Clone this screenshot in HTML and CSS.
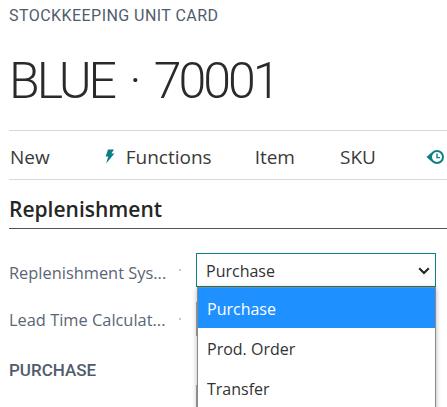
FILE: index.html
```html
<!DOCTYPE html>
<html lang="en">
<head>
<meta charset="utf-8">
<title>Stockkeeping Unit Card</title>
<link rel="stylesheet" href="styles.css">
</head>
<body>
<div class="page">
  <div class="caption">STOCKKEEPING UNIT CARD</div>
  <h1 class="title">BLUE · 70001</h1>
  <nav class="actions">
    <span class="action action-new">New</span>
    <span class="action action-functions">
      <svg class="icon-bolt" width="11" height="15" viewBox="0 0 11 15"><path d="M4 0.5H10L7.4 4.6H10.4L2.2 14.5L4.2 7.6H1.6Z" fill="#0b7f86"/></svg>
      Functions
    </span>
    <span class="action action-item">Item</span>
    <span class="action action-sku">SKU</span>
    <svg class="icon-history" width="20" height="16" viewBox="0 0 20 16"><circle cx="11" cy="8" r="6" fill="none" stroke="#0b7f86" stroke-width="2"/><path d="M0.5 8L5.5 3.5V12.5Z" fill="#0b7f86"/><path d="M11 4.5V8.6H14" fill="none" stroke="#0b7f86" stroke-width="1.4"/></svg>
  </nav>
  <h2 class="section">Replenishment</h2>
  <div class="fields">
    <div class="field">
      <span class="label label-first">Replenishment Sys...</span><span class="dot"></span>
      <div class="select">Purchase
        <svg class="chevron" width="12" height="8" viewBox="0 0 12 8"><path d="M1.2 1.2L6 6L10.8 1.2" fill="none" stroke="#222" stroke-width="2"/></svg>
      </div>
    </div>
    <div class="field">
      <span class="label">Lead Time Calculat...</span><span class="dot"></span>
      <div class="input"></div>
    </div>
  </div>
  <div class="group">PURCHASE</div>
  <div class="input-stub"></div>
  <ul class="menu">
    <li class="option selected">Purchase</li>
    <li class="option">Prod. Order</li>
    <li class="option">Transfer</li>
  </ul>
</div>
</body>
</html>
```
FILE: styles.css
```css
html, body {
  margin: 0;
  height: 100%;
  overflow: hidden;
  background: #fff;
}
.page {
  position: relative;
  height: 407px;
  overflow: hidden;
  padding-left: 9px;
  font-family: "Open Sans", "Noto Sans", sans-serif;
  color: #333;
}
.caption {
  padding-top: 7px;
  font-family: Roboto, sans-serif;
  font-size: 16px;
  letter-spacing: 0.45px;
  line-height: 18px;
  color: #505c6d;
}
.title {
  margin: 28px 0 0;
  font-family: Roboto, sans-serif;
  font-weight: 300;
  font-size: 50px;
  letter-spacing: -3px;
  word-spacing: 6px;
  line-height: 56px;
  color: #2a2a2a;
  white-space: nowrap;
}
.actions {
  margin-top: 21px;
  height: 50px;
  box-sizing: border-box;
  padding-top: 3px;
  border-top: 1px solid #d8d8d8;
  border-bottom: 1px solid #d8d8d8;
  display: flex;
  align-items: center;
  font-size: 19px;
  color: #3a3a3a;
  white-space: nowrap;
  overflow: hidden;
}
.action {
  display: flex;
  align-items: center;
}
.action-new { margin-left: 1px; }
.action-functions { margin-left: 54px; gap: 11px; }
.action-item { margin-left: 43px; }
.action-sku { margin-left: 45px; }
.icon-history { margin-left: 50px; flex: none; }
.section {
  margin: 0;
  height: 49px;
  box-sizing: border-box;
  border-bottom: 1px solid #4a5560;
  font-size: 21px;
  font-weight: 600;
  line-height: 59px;
  color: #262626;
}
.fields {
  display: flex;
  flex-direction: column;
  gap: 15px;
  padding-top: 24px;
}
.field {
  display: flex;
  align-items: center;
  height: 34px;
}
.label {
  width: 170px;
  font-size: 16.4px;
  color: #5a6575;
  white-space: nowrap;
}
.label-first {
  padding-top: 4px;
}
.dot {
  width: 2px;
  height: 2px;
  background: #c8c8c8;
  margin-right: 15px;
}
.select {
  position: relative;
  width: 240px;
  height: 34px;
  box-sizing: border-box;
  border: 1px solid #0b7f86;
  padding-left: 9px;
  font-size: 16px;
  line-height: 35px;
  color: #333;
}
.chevron {
  position: absolute;
  right: 5px;
  top: 13px;
}
.input {
  width: 240px;
  height: 34px;
  box-sizing: border-box;
  border: 1px solid #a8a8a8;
}
.group {
  margin-top: 24px;
  font-family: Roboto, sans-serif;
  font-size: 17px;
  font-weight: 500;
  line-height: 20px;
  color: #505c6d;
}
.input-stub {
  position: absolute;
  left: 196px;
  top: 385px;
  width: 240px;
  height: 34px;
  box-sizing: border-box;
  border: 1px solid #a8a8a8;
}
.menu {
  position: absolute;
  left: 197px;
  top: 287px;
  width: 239px;
  height: 130px;
  box-sizing: border-box;
  margin: 0;
  padding: 0;
  list-style: none;
  background: #fff;
  border: 1px solid #8a8a8a;
  box-shadow: 0 1px 5px rgba(0, 0, 0, 0.3);
}
.option {
  height: 40px;
  padding-left: 9px;
  font-size: 16px;
  line-height: 42px;
  color: #333;
}
.option.selected {
  background: #1e90ff;
  color: #fff;
}
```
